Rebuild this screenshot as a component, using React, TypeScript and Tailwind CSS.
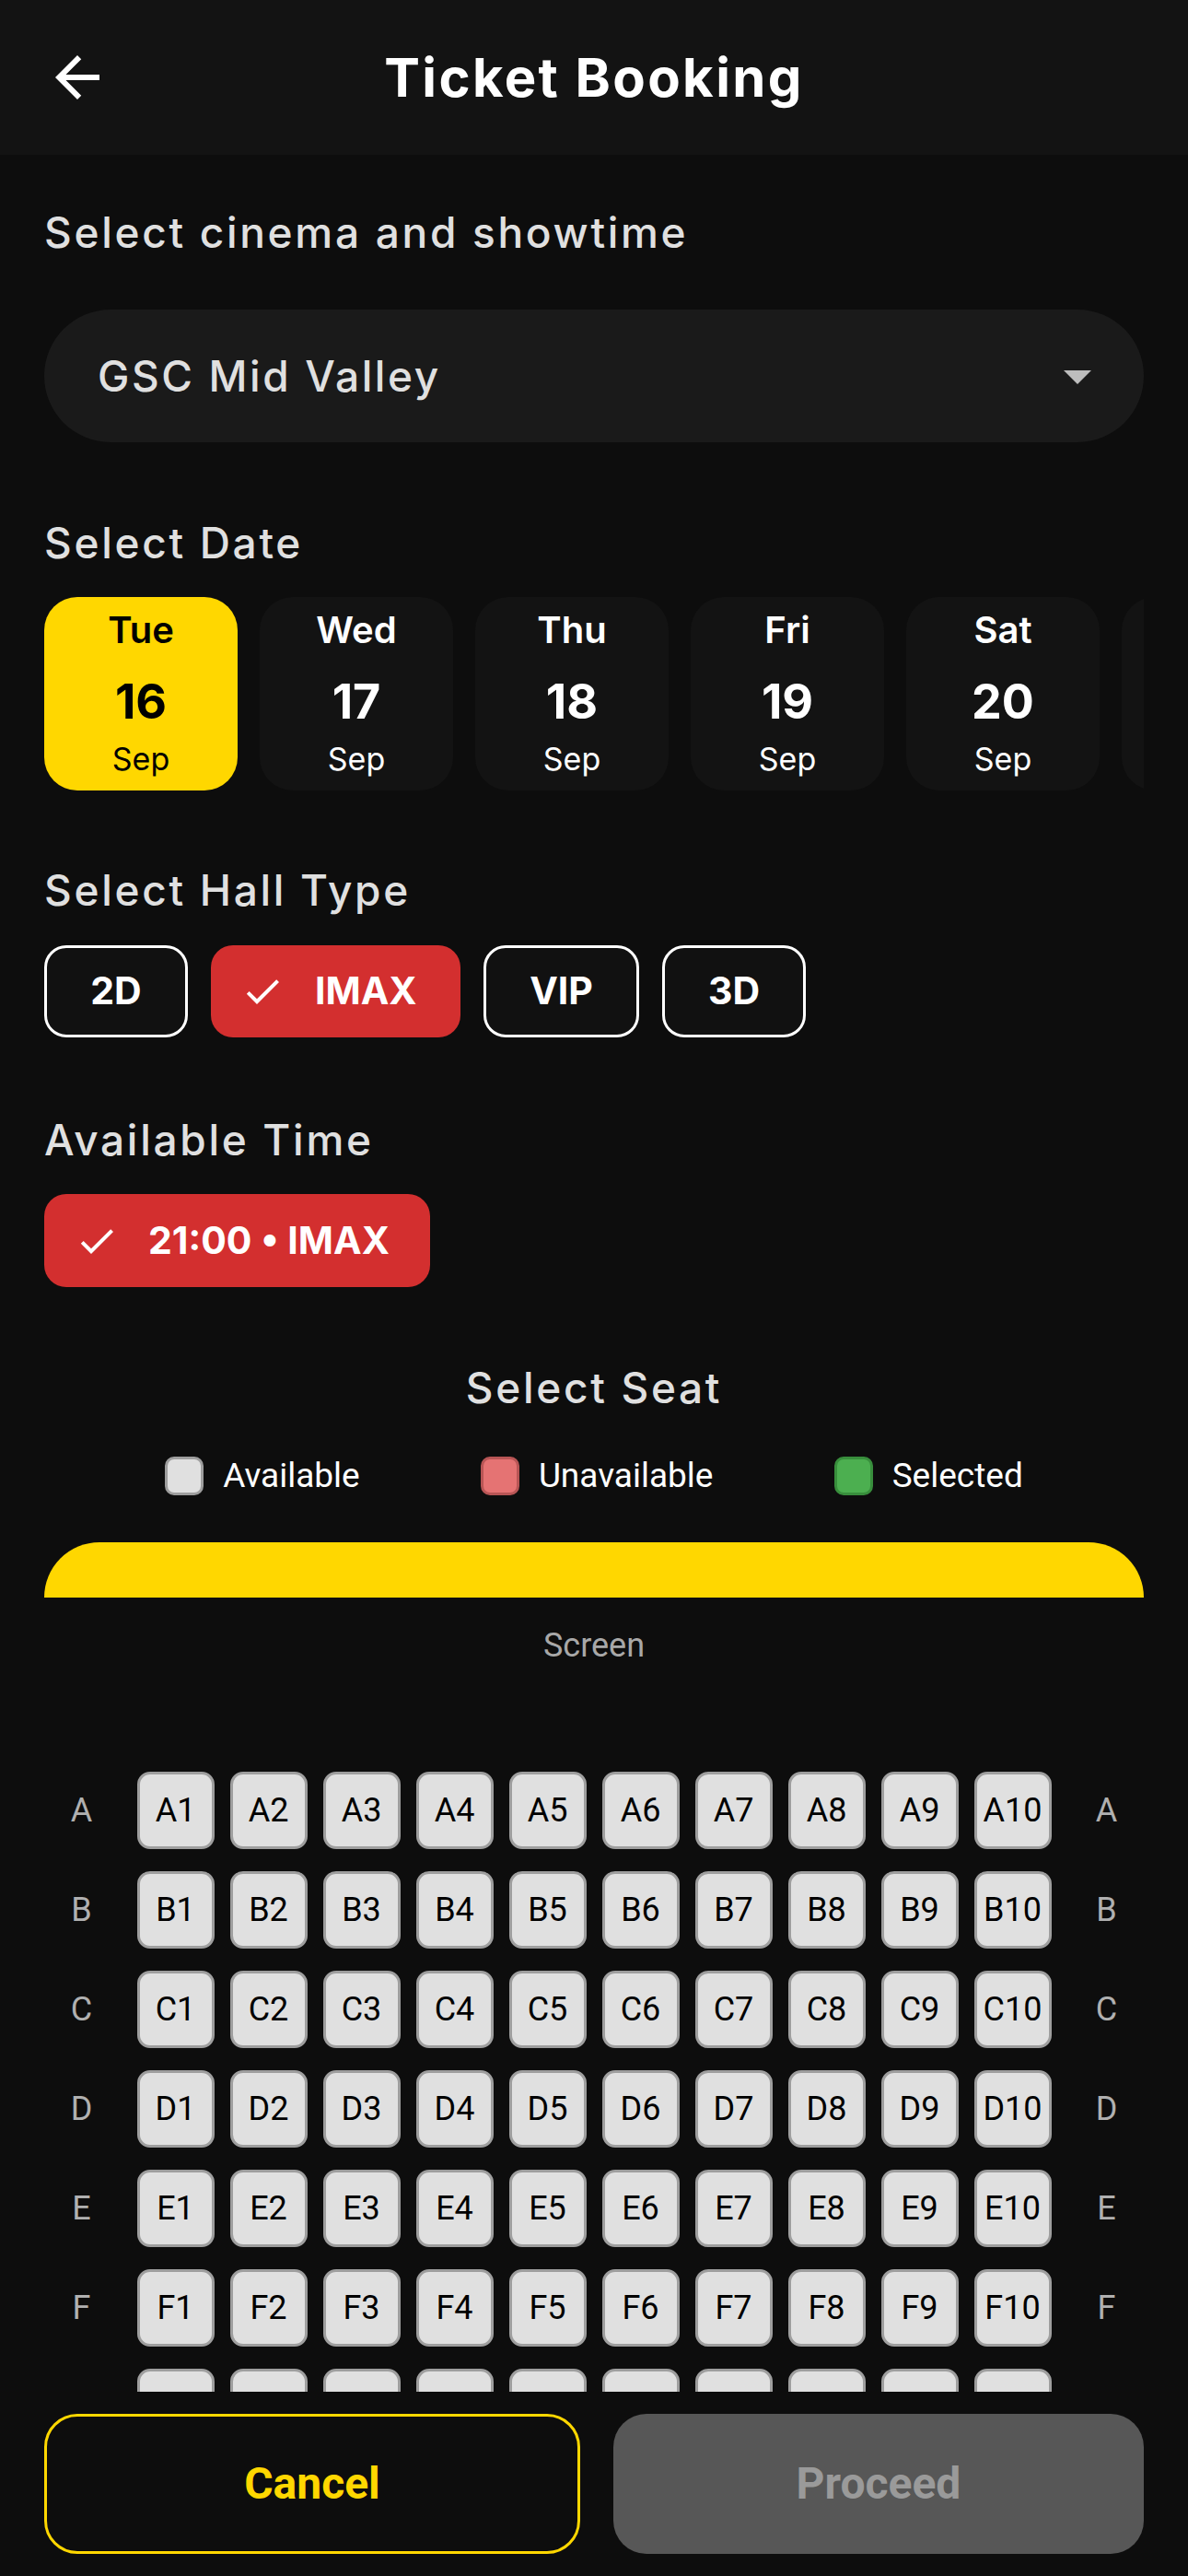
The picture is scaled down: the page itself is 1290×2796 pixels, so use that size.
import React from 'react'

const dates = [
  { day: 'Tue', date: '16', month: 'Sep' },
  { day: 'Wed', date: '17', month: 'Sep' },
  { day: 'Thu', date: '18', month: 'Sep' },
  { day: 'Fri', date: '19', month: 'Sep' },
  { day: 'Sat', date: '20', month: 'Sep' },
]

const halls = [
  { name: '2D', width: 'w-[156px]' },
  { name: 'IMAX', width: 'w-[271px]' },
  { name: 'VIP', width: 'w-[169px]' },
  { name: '3D', width: 'w-[156px]' },
]

const rows = ['A', 'B', 'C', 'D', 'E', 'F']
const cols = [1, 2, 3, 4, 5, 6, 7, 8, 9, 10]

const CheckIcon = () => (
  <svg width="48" height="48" viewBox="0 0 24 24" fill="#ffffff">
    <path d="M9 16.17L4.83 12l-1.42 1.41L9 19 21 7l-1.41-1.41z" />
  </svg>
)

const Heading = ({ children, className = '' }: { children: React.ReactNode; className?: string }) => (
  <h2
    className={`text-[46px] leading-[48px] font-medium tracking-[2.7px] text-[#e0e0e0] ${className}`}
    style={{ fontFamily: 'Inter, sans-serif' }}
  >
    {children}
  </h2>
)

const App: React.FC = () => {
  return (
    <div className="w-[1290px] h-[2796px] bg-[#0d0d0d] flex flex-col overflow-hidden">
      <header className="h-[168px] shrink-0 bg-[#131313] grid grid-cols-[168px_1fr_168px] items-center">
        <div className="pl-[48px] flex items-center">
          <svg width="72" height="72" viewBox="0 0 24 24" fill="#ffffff">
            <path d="M20 11H7.83l5.59-5.59L12 4l-8 8 8 8 1.41-1.41L7.83 13H20v-2z" />
          </svg>
        </div>
        <h1
          className="text-center text-white text-[58px] leading-[72px] font-bold tracking-[2.4px]"
          style={{ fontFamily: 'Inter, sans-serif' }}
        >
          Ticket Booking
        </h1>
        <div />
      </header>

      <main className="flex-1 overflow-hidden px-[48px] flex flex-col">
        <Heading className="mt-[60px]">Select cinema and showtime</Heading>

        <div className="mt-[60px] h-[144px] shrink-0 rounded-full bg-[#1a1a1a] flex items-center justify-between pl-[58px] pr-[36px]">
          <span
            className="text-[46px] font-medium tracking-[2.6px] text-[#e0e0e0]"
            style={{ fontFamily: 'Inter, sans-serif' }}
          >
            GSC Mid Valley
          </span>
          <svg width="72" height="72" viewBox="0 0 24 24" fill="#bdbdbd">
            <path d="M7 10l5 5 5-5z" />
          </svg>
        </div>

        <Heading className="mt-[85px]">Select Date</Heading>

        <div className="mt-[35px] flex gap-[24px] overflow-hidden shrink-0" style={{ fontFamily: 'Inter, sans-serif' }}>
          {dates.map((d, i) => {
            const active = i === 0
            return (
              <div
                key={d.date}
                className={`w-[210px] h-[210px] shrink-0 rounded-[36px] flex flex-col items-center ${
                  active ? 'bg-[#ffd700] text-black' : 'bg-[#131313] text-white'
                }`}
              >
                <span className="mt-[16px] text-[40px] leading-[40px] font-semibold">{d.day}</span>
                <span className="mt-[34px] text-[52px] leading-[48px] font-bold">{d.date}</span>
                <span className="mt-[20px] text-[34px] leading-[36px] font-normal">{d.month}</span>
              </div>
            )
          })}
          {/* next day, scrolled off the edge */}
          <div className="w-[210px] h-[210px] shrink-0 rounded-[36px] bg-[#131313]" />
        </div>

        <Heading className="mt-[84px]">Select Hall Type</Heading>

        <div className="mt-[36px] flex gap-[25px] shrink-0" style={{ fontFamily: 'Inter, sans-serif' }}>
          {halls.map((h) => {
            const active = h.name === 'IMAX'
            return (
              <div
                key={h.name}
                className={`${h.width} h-[100px] rounded-[24px] flex items-center text-white text-[41px] font-bold ${
                  active
                    ? 'bg-[#d32f2f] pl-[32px] gap-[33px]'
                    : 'bg-[#111111] border-[3px] border-white justify-center'
                }`}
              >
                {active && <CheckIcon />}
                <span>{h.name}</span>
              </div>
            )
          })}
        </div>

        <Heading className="mt-[87px]">Available Time</Heading>

        <div
          className="mt-[35px] w-[419px] h-[101px] shrink-0 rounded-[24px] bg-[#d32f2f] flex items-center pl-[33px] gap-[32px] text-white text-[41px] font-bold"
          style={{ fontFamily: 'Inter, sans-serif' }}
        >
          <CheckIcon />
          <span>21:00 • IMAX</span>
        </div>

        <Heading className="mt-[85px] text-center">Select Seat</Heading>

        <div
          className="mt-[51px] h-[42px] shrink-0 flex justify-evenly items-center text-white text-[37px]"
          style={{ fontFamily: 'Roboto, sans-serif' }}
        >
          <div className="flex items-center gap-[21px]">
            <div className="w-[42px] h-[42px] rounded-[10px] bg-[#e0e0e0] border-[3px] border-[#9e9e9e]" />
            <span>Available</span>
          </div>
          <div className="flex items-center gap-[21px]">
            <div className="w-[42px] h-[42px] rounded-[10px] bg-[#e57373] border-[3px] border-[#b85555]" />
            <span>Unavailable</span>
          </div>
          <div className="flex items-center gap-[21px]">
            <div className="w-[42px] h-[42px] rounded-[10px] bg-[#4caf50] border-[3px] border-[#388e3c]" />
            <span>Selected</span>
          </div>
        </div>

        <div className="mt-[51px] h-[60px] shrink-0 bg-[#ffd700] rounded-t-[60px]" />

        <p
          className="mt-[34px] text-center text-[36px] leading-[36px] text-[#a8a8a8]"
          style={{ fontFamily: 'Roboto, sans-serif' }}
        >
          Screen
        </p>

        <div className="mt-[119px] flex flex-col gap-[24px]" style={{ fontFamily: 'Roboto, sans-serif' }}>
          {rows.map((r) => (
            <div key={r} className="flex items-center justify-center gap-[24px] shrink-0">
              <span className="w-[72px] text-center text-[36px] text-[#b0b0b0]">{r}</span>
              <div className="flex gap-[17px]">
                {cols.map((c) => (
                  <div
                    key={c}
                    className="w-[84px] h-[84px] rounded-[14px] bg-[#e0e0e0] border-[3px] border-[#9e9e9e] flex items-center justify-center text-[36px] text-black"
                  >
                    {r}
                    {c}
                  </div>
                ))}
              </div>
              <span className="w-[72px] text-center text-[36px] text-[#b0b0b0]">{r}</span>
            </div>
          ))}
          {/* row G, only its top edge shows above the footer */}
          <div className="flex items-center justify-center gap-[24px] shrink-0">
            <span className="w-[72px]" />
            <div className="flex gap-[17px]">
              {cols.map((c) => (
                <div
                  key={c}
                  className="w-[84px] h-[84px] rounded-[14px] bg-[#e0e0e0] border-[3px] border-[#9e9e9e]"
                />
              ))}
            </div>
            <span className="w-[72px]" />
          </div>
        </div>
      </main>

      <footer className="shrink-0 px-[48px] py-[24px] flex gap-[36px]" style={{ fontFamily: 'Roboto, sans-serif' }}>
        <button className="flex-1 h-[152px] rounded-[36px] border-[3px] border-[#ffd700] bg-[#0d0d0d] text-[#ffd700] text-[48px] font-bold">
          Cancel
        </button>
        <button className="flex-1 h-[152px] rounded-[36px] bg-[#575757] text-[#9a9a9a] text-[48px] font-bold">
          Proceed
        </button>
      </footer>
    </div>
  )
}

export default App
